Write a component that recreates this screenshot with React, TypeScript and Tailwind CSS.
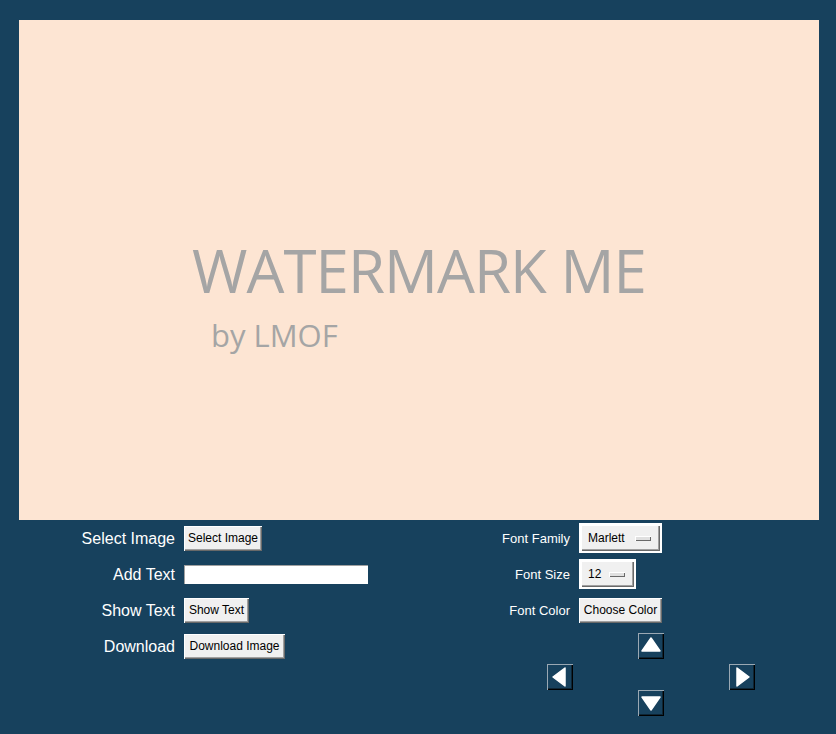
import React from "react";

const raised =
  "bg-[#f0f0f0] shadow-[inset_1px_1px_#ffffff,inset_-1px_-1px_#696969,inset_-2px_-2px_#a0a0a0]";

function Btn({ label, w }: { label: string; w: string }) {
  return (
    <div
      className={`${raised} ${w} h-[25px] flex items-center justify-center text-[12px] text-black font-['Liberation_Sans',Arial,sans-serif]`}
    >
      {label}
    </div>
  );
}

function MenuBtn({ label, w }: { label: string; w: string }) {
  return (
    <div className={`${w} h-[30px] bg-white p-[2px]`}>
      <div
        className={`${raised} w-full h-full flex items-center justify-between pl-[7px] pr-[9px] text-[12px] text-black font-['Liberation_Sans',Arial,sans-serif]`}
      >
        <span>{label}</span>
        <span className="w-[16px] h-[5px] bg-[#e0e0e0] shadow-[inset_1px_1px_#ffffff,inset_-1px_-1px_#696969]" />
      </div>
    </div>
  );
}

function Arrow({ dir }: { dir: "up" | "down" | "left" | "right" }) {
  const pts = {
    up: "13,5 22,18 4,18",
    down: "4,7 22,7 13,20",
    left: "6,13 18,4 18,22",
    right: "20,13 8,4 8,22",
  }[dir];
  return (
    <div className="w-[26px] h-[26px] bg-[#17415d] shadow-[inset_1px_1px_#9aa8b3,inset_-1px_-1px_#000000,inset_-2px_-2px_#0d2535] flex items-center justify-center">
      <svg width="26" height="26" viewBox="0 0 26 26">
        <polygon points={pts} fill="#ffffff" stroke="#ffffff" strokeWidth="1.5" strokeLinejoin="round" />
      </svg>
    </div>
  );
}

export default function App() {
  const lbl =
    "text-white text-right font-['Liberation_Sans',Arial,sans-serif] flex items-center justify-end pt-[1px]";
  return (
    <div className="w-[836px] h-[734px] bg-[#17415d] overflow-hidden flex flex-col">
      <div className="ml-[19px] mt-[20px] w-[800px] h-[500px] bg-[#fde5d3] relative shrink-0">
        <div className="absolute left-[173px] top-[220px] text-[60px] leading-none text-[#a5a5a5] font-['Open_Sans',sans-serif] tracking-[-0.95px] whitespace-nowrap">
          WATERMARK ME
        </div>
        <div className="absolute left-[192px] top-[300px] text-[31px] leading-none text-[#a5a5a5] font-['Open_Sans',sans-serif] whitespace-nowrap">
          by LMOF
        </div>
      </div>
      <div className="flex flex-row">
        <div className="w-[400px] grid grid-cols-[175px_1fr] gap-x-[9px] auto-rows-[36px]">
          <div className={`${lbl} text-[16px]`}>Select Image</div>
          <div className="flex items-center">
            <Btn label="Select Image" w="w-[78px]" />
          </div>
          <div className={`${lbl} text-[16px]`}>Add Text</div>
          <div className="flex items-center">
            <div className="w-[184px] h-[19px] bg-white shadow-[inset_1px_1px_#a0a0a0]" />
          </div>
          <div className={`${lbl} text-[16px]`}>Show Text</div>
          <div className="flex items-center">
            <Btn label="Show Text" w="w-[65px]" />
          </div>
          <div className={`${lbl} text-[16px]`}>Download</div>
          <div className="flex items-center">
            <Btn label="Download Image" w="w-[101px]" />
          </div>
        </div>
        <div className="flex flex-col">
          <div className="grid grid-cols-[170px_1fr] gap-x-[9px] auto-rows-[36px]">
            <div className={`${lbl} text-[13px]`}>Font Family</div>
            <div className="flex items-center">
              <MenuBtn label="Marlett" w="w-[83px]" />
            </div>
            <div className={`${lbl} text-[13px]`}>Font Size</div>
            <div className="flex items-center">
              <MenuBtn label="12" w="w-[57px]" />
            </div>
            <div className={`${lbl} text-[13px]`}>Font Color</div>
            <div className="flex items-center">
              <Btn label="Choose Color" w="w-[83px]" />
            </div>
          </div>
          <div className="ml-[147px] mt-[5px] grid grid-cols-[26px_26px_26px] gap-x-[65px]">
            <div />
            <Arrow dir="up" />
            <div />
            <div className="mt-[5px]">
              <Arrow dir="left" />
            </div>
            <div />
            <div className="mt-[5px]">
              <Arrow dir="right" />
            </div>
            <div />
            <Arrow dir="down" />
            <div />
          </div>
        </div>
      </div>
    </div>
  );
}
